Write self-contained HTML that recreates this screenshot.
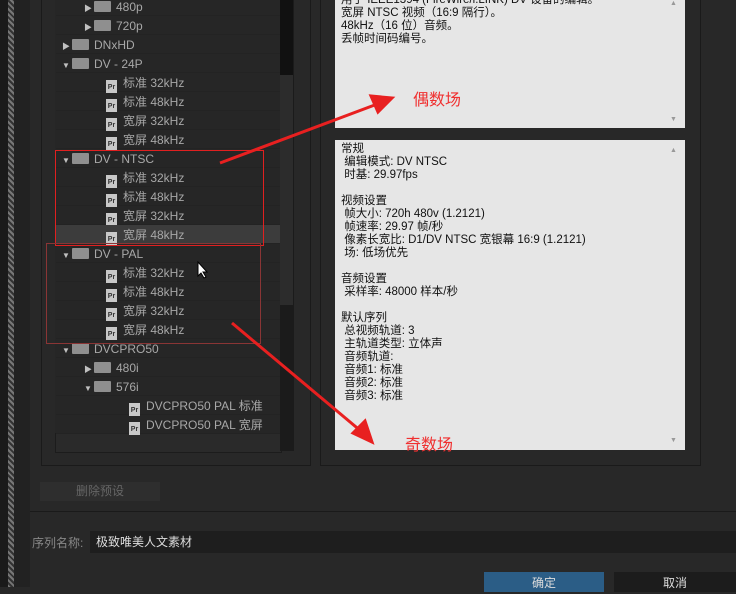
<!DOCTYPE html><html><head><meta charset="utf-8"><style>
body{margin:0;width:736px;height:587px;background:#282828;position:relative;overflow:hidden;font-family:"Liberation Sans","Noto Sans CJK SC",sans-serif;}
.a{position:absolute}
.row{position:absolute;left:56px;width:224px;height:18px;border-bottom:1px solid #232323;color:#a8a8a8;font-size:12px;line-height:20px}
.fold{display:inline-block;width:17px;height:11px;background:#8f8f8f;vertical-align:-1px;margin-right:5px;border-radius:1px}
.pr{display:inline-block;width:11px;height:13px;background:#c8c8c8;color:#333;font-size:7px;font-weight:bold;line-height:15px;text-align:center;vertical-align:-2px;margin-right:6px}
.tri{display:inline-block;width:10px;font-size:8px;color:#c0c0c0}
.txt{position:absolute;font-size:11.5px;color:#111;line-height:13px;white-space:pre;font-family:"Liberation Sans","Noto Sans CJK SC",sans-serif}
</style></head><body>
<div class="a" style="left:0;top:0;width:8px;height:587px;background:#1a1a1a"></div>
<div class="a" style="left:8px;top:0;width:6px;height:587px;background:repeating-linear-gradient(45deg,#777 0 2px,#333 2px 4px)"></div>
<div class="a" style="left:14px;top:0;width:16px;height:587px;background:#222"></div>
<div class="a" style="left:41px;top:-2px;width:268px;height:466px;border:1px solid #1a1a1a"></div>
<div class="a" style="left:55px;top:0;width:225px;height:433px;background:#262626"></div>
<div class="a" style="left:55px;top:433px;width:225px;height:18px;background:#2a2a2a;border:1px solid #1c1c1c"></div>
<div class="a" style="left:280px;top:0;width:14px;height:451px;background:#1b1b1b"></div>
<div class="a" style="left:280px;top:0;width:13px;height:75px;background:#111"></div>
<div class="a" style="left:280px;top:75px;width:13px;height:230px;background:#2c2c2c"></div>
<div class="row" style="top:-3px;padding-left:28px;width:196px"><span class="tri">▶</span><span class="fold"></span>480p</div>
<div class="row" style="top:16px;padding-left:28px;width:196px"><span class="tri">▶</span><span class="fold"></span>720p</div>
<div class="row" style="top:35px;padding-left:6px;width:218px"><span class="tri">▶</span><span class="fold"></span>DNxHD</div>
<div class="row" style="top:54px;padding-left:6px;width:218px"><span class="tri">▼</span><span class="fold"></span>DV - 24P</div>
<div class="row" style="top:73px;padding-left:50px;width:174px"><span class="pr">Pr</span>标准 32kHz</div>
<div class="row" style="top:92px;padding-left:50px;width:174px"><span class="pr">Pr</span>标准 48kHz</div>
<div class="row" style="top:111px;padding-left:50px;width:174px"><span class="pr">Pr</span>宽屏 32kHz</div>
<div class="row" style="top:130px;padding-left:50px;width:174px"><span class="pr">Pr</span>宽屏 48kHz</div>
<div class="row" style="top:149px;padding-left:6px;width:218px"><span class="tri">▼</span><span class="fold"></span>DV - NTSC</div>
<div class="row" style="top:168px;padding-left:50px;width:174px"><span class="pr">Pr</span>标准 32kHz</div>
<div class="row" style="top:187px;padding-left:50px;width:174px"><span class="pr">Pr</span>标准 48kHz</div>
<div class="row" style="top:206px;padding-left:50px;width:174px"><span class="pr">Pr</span>宽屏 32kHz</div>
<div class="row" style="top:225px;padding-left:50px;width:174px;background:#3c3c3c"><span class="pr">Pr</span>宽屏 48kHz</div>
<div class="row" style="top:244px;padding-left:6px;width:218px"><span class="tri">▼</span><span class="fold"></span>DV - PAL</div>
<div class="row" style="top:263px;padding-left:50px;width:174px"><span class="pr">Pr</span>标准 32kHz</div>
<div class="row" style="top:282px;padding-left:50px;width:174px"><span class="pr">Pr</span>标准 48kHz</div>
<div class="row" style="top:301px;padding-left:50px;width:174px"><span class="pr">Pr</span>宽屏 32kHz</div>
<div class="row" style="top:320px;padding-left:50px;width:174px"><span class="pr">Pr</span>宽屏 48kHz</div>
<div class="row" style="top:339px;padding-left:6px;width:218px"><span class="tri">▼</span><span class="fold"></span>DVCPRO50</div>
<div class="row" style="top:358px;padding-left:28px;width:196px"><span class="tri">▶</span><span class="fold"></span>480i</div>
<div class="row" style="top:377px;padding-left:28px;width:196px"><span class="tri">▼</span><span class="fold"></span>576i</div>
<div class="row" style="top:396px;padding-left:73px;width:151px"><span class="pr">Pr</span>DVCPRO50 PAL 标准</div>
<div class="row" style="top:415px;padding-left:73px;width:151px"><span class="pr">Pr</span>DVCPRO50 PAL 宽屏</div>
<div class="a" style="left:55px;top:150px;width:207px;height:94px;border:1px solid #e02020"></div>
<div class="a" style="left:46px;top:243px;width:213px;height:99px;border:1px solid #8a3535"></div>
<div class="a" style="left:320px;top:-2px;width:379px;height:466px;border:1px solid #1a1a1a"></div>
<div class="a" style="left:335px;top:0;width:350px;height:128px;background:#e6e6e6"></div>
<div class="a" style="left:335px;top:140px;width:350px;height:310px;background:#e6e6e6"></div>
<div class="txt" style="left:341px;top:-6px">用于 IEEE1394 (FireWire/i.LINK) DV 设备的编辑。
宽屏 NTSC 视频（16:9 隔行）。
48kHz（16 位）音频。
丢帧时间码编号。</div>
<div class="txt" style="left:341px;top:143px">常规
 编辑模式: DV NTSC
 时基: 29.97fps

视频设置
 帧大小: 720h 480v (1.2121)
 帧速率: 29.97 帧/秒
 像素长宽比: D1/DV NTSC 宽银幕 16:9 (1.2121)
 场: 低场优先

音频设置
 采样率: 48000 样本/秒

默认序列
 总视频轨道: 3
 主轨道类型: 立体声
 音频轨道:
 音频1: 标准
 音频2: 标准
 音频3: 标准</div>
<div class="a" style="left:670px;top:0;font-size:7px;color:#999">▲</div>
<div class="a" style="left:670px;top:116px;font-size:7px;color:#999">▼</div>
<div class="a" style="left:670px;top:147px;font-size:7px;color:#999">▲</div>
<div class="a" style="left:670px;top:437px;font-size:7px;color:#999">▼</div>
<div class="a" style="left:413px;top:86px;color:#f03030;font-size:16px">偶数场</div>
<div class="a" style="left:405px;top:431px;color:#f03030;font-size:16px">奇数场</div>
<svg class="a" style="left:0;top:0" width="736" height="587"><g stroke="#e82020" stroke-width="3" fill="#e82020"><line x1="220" y1="163" x2="380" y2="103"/><polygon points="392,98 371,96 378,112"/><line x1="232" y1="323" x2="362" y2="432"/><polygon points="372,442 353,433 365,421"/></g></svg>
<div class="a" style="left:30px;top:511px;width:706px;height:1px;background:#1a1a1a"></div>
<div class="a" style="left:40px;top:482px;width:120px;height:19px;background:#2e2e2e;color:#666;font-size:12px;text-align:center;line-height:19px">删除预设</div>
<div class="a" style="left:32px;top:534px;color:#888;font-size:12px">序列名称:</div>
<div class="a" style="left:90px;top:531px;width:646px;height:22px;background:#1e1e1e;color:#ddd;font-size:12px;line-height:22px;padding-left:6px">极致唯美人文素材</div>
<div class="a" style="left:484px;top:572px;width:120px;height:20px;background:#2b5d86;color:#ddd;font-size:12px;text-align:center;line-height:22px">确定</div>
<div class="a" style="left:614px;top:572px;width:122px;height:20px;background:#1c1c1c;color:#ddd;font-size:12px;text-align:center;line-height:22px">取消</div>
<svg class="a" style="left:197px;top:261px" width="12" height="18"><path d="M1 1 L1 15 L4 12 L7 17 L9 16 L6 11 L10 11 Z" fill="#fff" stroke="#000" stroke-width="1"/></svg>
</body></html>
